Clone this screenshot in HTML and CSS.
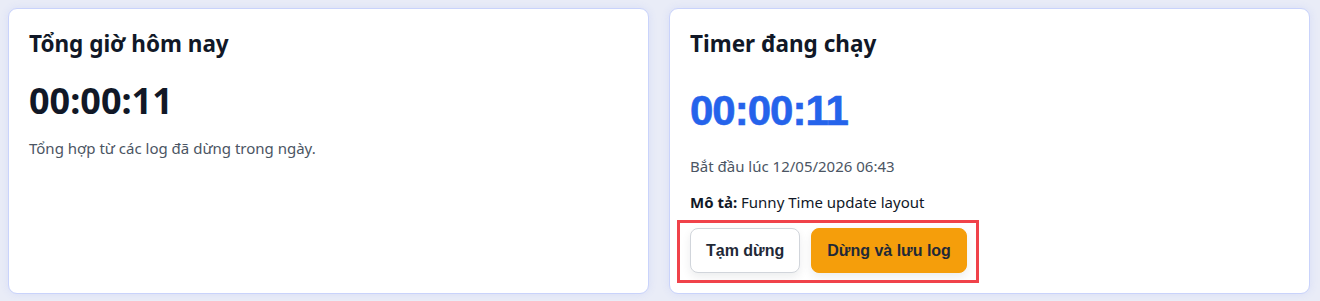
FILE: index.html
```html
<!DOCTYPE html>
<html lang="vi">
<head>
    <meta charset="UTF-8">
    <meta name="viewport" content="width=device-width, initial-scale=1.0">
    <title>Funny Time</title>
    <link rel="stylesheet" href="styles.css">
</head>
<body>

    <div class="container">
        <!-- Tổng giờ trong ngày -->
        <div class="card">
            <h2>Tổng giờ hôm nay</h2>
            <div class="total-time">00:00:11</div>
            <p class="muted">Tổng hợp từ các log đã dừng trong ngày.</p>
        </div>

        <!-- Timer đang chạy -->
        <div class="card">
            <h2>Timer đang chạy</h2>
            <div class="running-time">00:00:11</div>
            <p class="muted start">Bắt đầu lúc 12/05/2026 06:43</p>
            <p class="desc"><strong>Mô tả:</strong> Funny Time update layout</p>
            <div class="actions">
                <button class="btn btn-light">Tạm dừng</button>
                <button class="btn btn-warning">Dừng và lưu log</button>
            </div>
        </div>
    </div>

</body>
</html>
```

FILE: styles.css
```css
/* Nền chung */
body {
    font-family: 'Noto Sans', sans-serif;
    background-color: #e9ecf7;
    color: #111827;
    margin: 0;
    padding: 8px 10px 6px 8px;
}

/* Hai cột */
.container {
    display: grid;
    grid-template-columns: repeat(2, 1fr);
    gap: 20px;
}

.card {
    background: #fff;
    border: 1px solid #c9d3fb;
    border-radius: 9px;
    padding: 20px;
    box-shadow: 0 0 8px rgba(99, 120, 240, 0.12);
}

h2 {
    font-size: 22.5px;
    font-weight: 700;
    line-height: 30px;
    margin: 0;
}

.total-time {
    font-size: 36px;
    font-weight: 700;
    line-height: 46px;
    margin-top: 19px;
    color: #111827;
}

.running-time {
    font-family: 'Liberation Sans', Arial, sans-serif;
    font-size: 42px;
    font-weight: 700;
    letter-spacing: -1px;
    line-height: 48px;
    margin-top: 28px;
    color: #2563eb;
    -webkit-text-stroke: 0.6px #2563eb;
}

p {
    margin: 0;
    font-size: 15px;
    line-height: 20px;
}

.muted {
    color: #4b5563;
    margin-top: 14px;
}

.start {
    margin-top: 21px;
}

.desc {
    margin-top: 16px;
    color: #111827;
}

/* Khung nút (viền đỏ đánh dấu) */
.actions {
    position: relative;
    display: flex;
    gap: 11px;
    margin-top: 16px;
    width: fit-content;
}

.actions::after {
    content: "";
    position: absolute;
    top: -8px;
    left: -13px;
    right: -12px;
    bottom: -10px;
    border: 3px solid #f0424a;
    pointer-events: none;
}

.btn {
    font-family: 'Liberation Sans', Arial, sans-serif;
    font-size: 16px;
    font-weight: 700;
    color: #1f2937;
    height: 45px;
    padding: 0 15px;
    border-radius: 8px;
    cursor: pointer;
    box-shadow: 0 4px 10px rgba(15, 23, 42, 0.08);
}

.btn-light {
    background: #fff;
    border: 1px solid #d1d5db;
}

.btn-warning {
    background: #f59e0b;
    border: 1px solid #f59e0b;
}
```
